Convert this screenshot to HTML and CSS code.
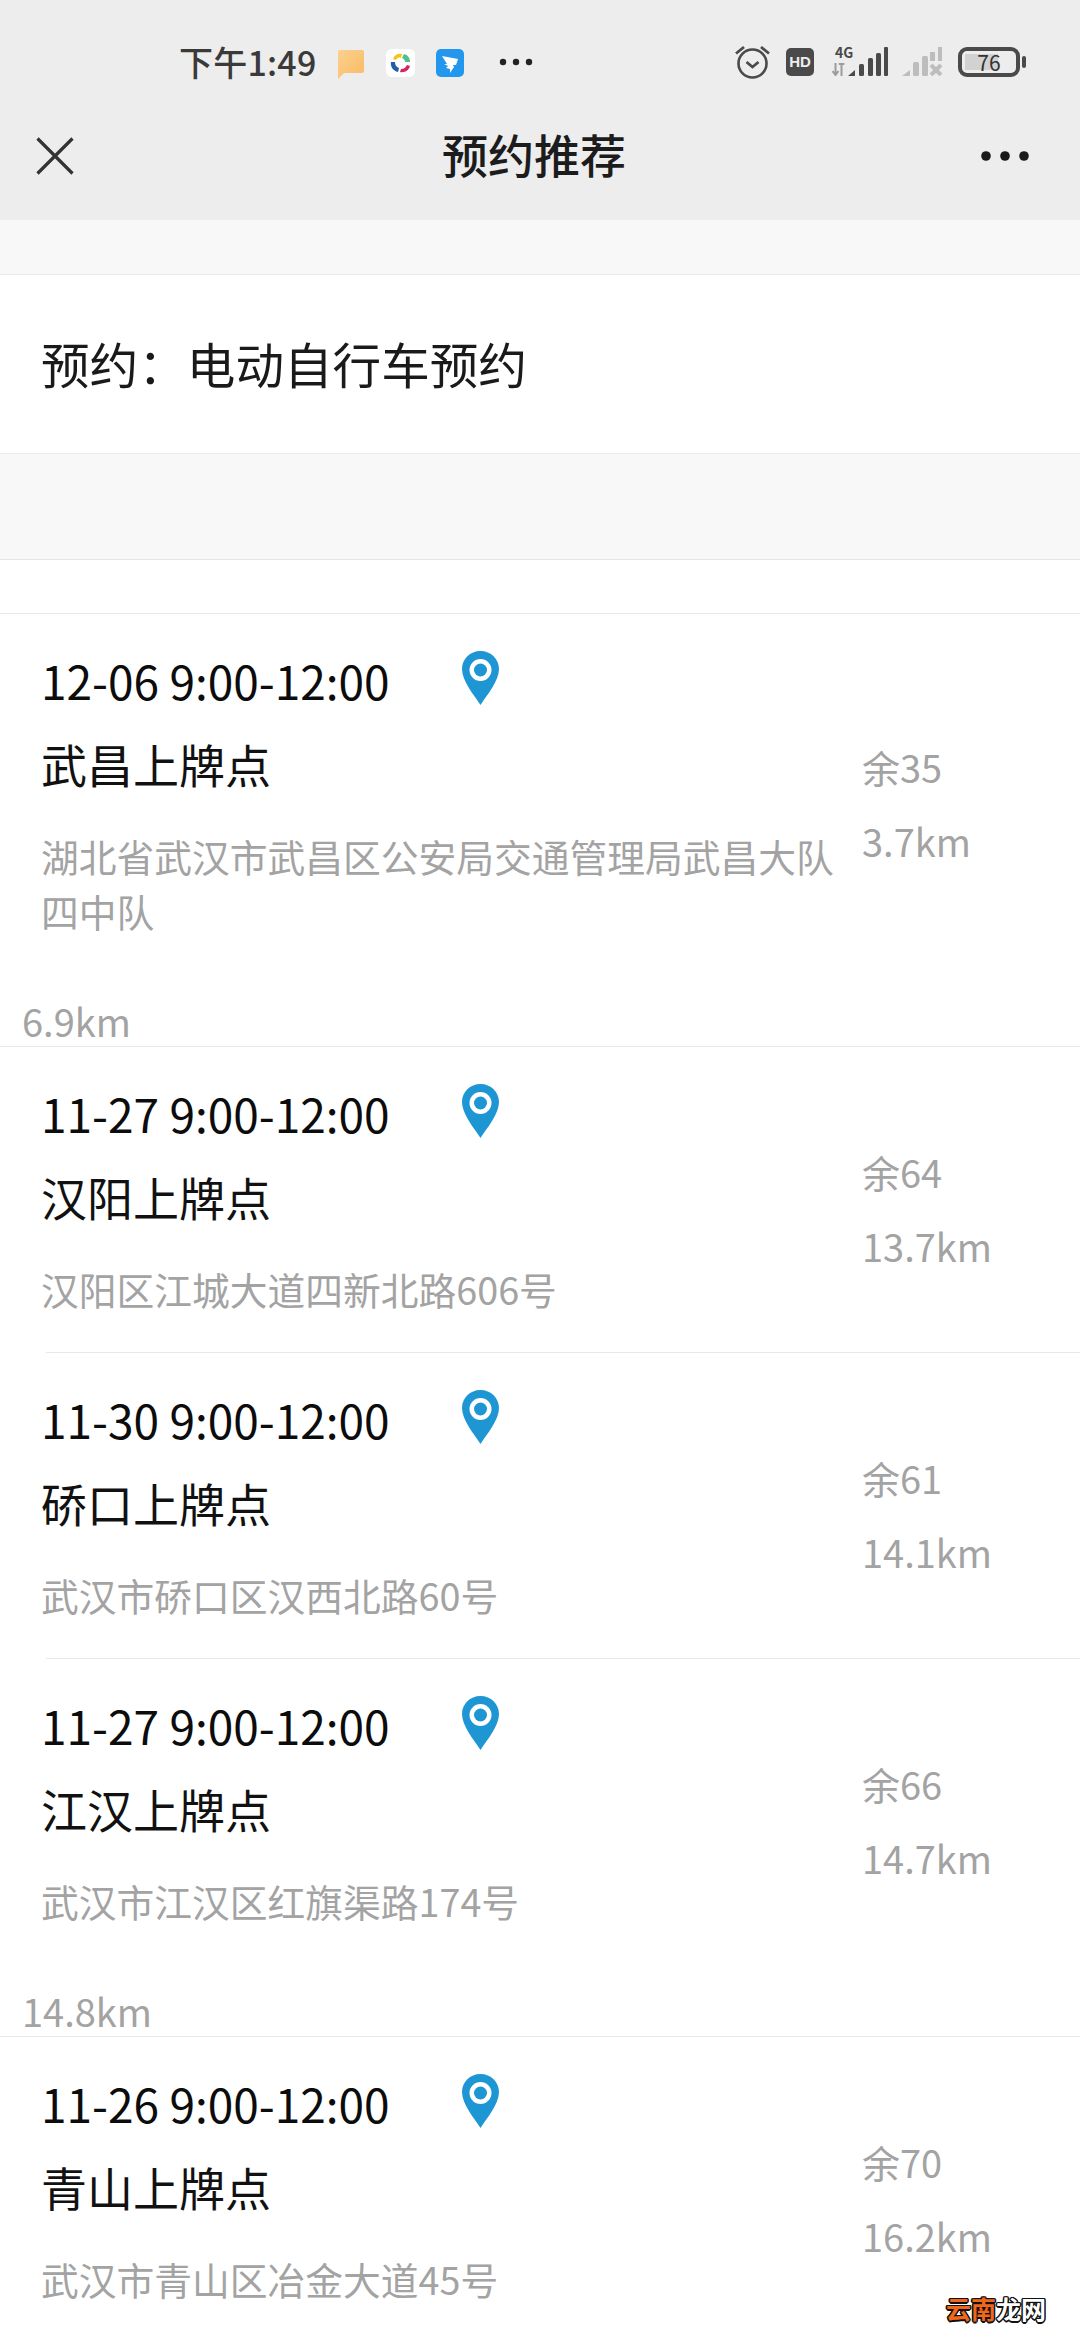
FILE: index.html
```html
<!DOCTYPE html>
<html lang="zh-CN">
<head>
<meta charset="utf-8">
<title>预约推荐</title>
<link rel="stylesheet" href="styles.css">
</head>
<body>
<div class="page">
  <header class="top">
    <div class="status">
      <div class="status-left">
        <span class="clock">下午1:49</span>
        <svg class="ic-msg" width="27" height="30" viewBox="0 0 27 30"><defs><linearGradient id="m" x1="0" y1="0" x2="1" y2="1"><stop offset="0" stop-color="#fcd08f"/><stop offset="1" stop-color="#f8bb62"/></linearGradient></defs><path d="M2 1h23a2 2 0 0 1 2 2v19a2 2 0 0 1-2 2H7l-6 6 0-28a2 2 0 0 1 1-1z" fill="url(#m)"/></svg>
        <svg class="ic-app" width="29" height="28" viewBox="0 0 29 28"><rect width="29" height="28" rx="6" fill="#fff"/><path d="M7 10c1-4 5-6 9-5l-1 4c-2-1-4 0-5 2z" fill="#f5c518"/><path d="M18 5c4 1 6 4 6 8l-5 0c0-2-1-3-3-4z" fill="#4fc08d"/><path d="M24 17c-1 4-5 7-10 6l1-3c3 0 4-1 6-4z" fill="#d8245e"/><path d="M12 23c-5-1-8-6-7-10l4 0c0 3 1 5 4 6z" fill="#1f5fae"/></svg>
        <svg class="ic-ding" width="28" height="28" viewBox="0 0 28 28"><rect width="28" height="28" rx="5" fill="#2396ee"/><path d="M6 7l16 3-2 6-3 0 1 2-4 6 0-4-4-1 2-2-4-2 3 0z" fill="#fff"/></svg>
        <svg class="ic-dots" width="34" height="8" viewBox="0 0 34 8"><circle cx="4" cy="4" r="3.2" fill="#222"/><circle cx="17" cy="4" r="3.2" fill="#222"/><circle cx="30" cy="4" r="3.2" fill="#222"/></svg>
      </div>
      <div class="status-right">
        <svg class="ic-alarm" width="35" height="34" viewBox="0 0 35 34"><circle cx="17.5" cy="18.5" r="14" fill="none" stroke="#4a4a4a" stroke-width="2.6"/><path d="M11.5 17l6 5 6-5" fill="none" stroke="#4a4a4a" stroke-width="2.8"/><path d="M1 8.500l8-6.500M26 2l8 6.500" stroke="#4a4a4a" stroke-width="2.800"/></svg>
        <span class="hd">HD</span>
        <span class="net">
          <span class="net-label">4G</span>
          <svg class="ic-arrows" width="13" height="13" viewBox="0 0 13 13"><path d="M3.500 0v12M0.500 8l3 4 3-4M9.500 13V1M6.800 1h5.500" fill="none" stroke="#9c9c9c" stroke-width="2"/></svg>
          <svg class="ic-bars" width="40" height="29" viewBox="0 0 40 29"><path d="M0 29l7-6v6z" fill="#4a4a4a"/><rect x="11" y="17" width="5" height="12" rx="1.500" fill="#4a4a4a"/><rect x="20" y="11" width="5" height="18" rx="1.500" fill="#4a4a4a"/><rect x="28" y="6" width="5" height="23" rx="1.500" fill="#4a4a4a"/><rect x="36" y="0" width="4" height="29" rx="1" fill="#4a4a4a"/></svg>
        </span>
        <svg class="ic-signal2" width="41" height="29" viewBox="0 0 41 29"><path d="M0 29l8-6v6z" fill="#bdbdbd"/><rect x="11" y="15" width="6" height="14" rx="1.500" fill="#bdbdbd"/><rect x="20" y="9" width="6" height="20" rx="1.500" fill="#bdbdbd"/><rect x="28" y="5" width="5" height="9" fill="#bdbdbd"/><rect x="36" y="0" width="4" height="14" fill="#bdbdbd"/><path d="M29 18l10 10M39 18L29 28" stroke="#bdbdbd" stroke-width="4"/></svg>
        <span class="battery"><span class="battery-fill"></span><span class="battery-num">76</span></span>
        <span class="battery-nub"></span>
      </div>
    </div>
    <nav class="nav">
      <svg class="ic-close" width="38" height="38" viewBox="0 0 38 38"><path d="M1.500 1.500l35 35M36.500 1.500l-35 35" stroke="#333" stroke-width="3.200"/></svg>
      <h1 class="nav-title">预约推荐</h1>
      <svg class="ic-more" width="48" height="10" viewBox="0 0 48 10"><circle cx="5" cy="5" r="4.800" fill="#1a1a1a"/><circle cx="24" cy="5" r="4.800" fill="#1a1a1a"/><circle cx="43" cy="5" r="4.800" fill="#1a1a1a"/></svg>
    </nav>
  </header>

  <div class="band band-a"></div>
  <section class="heading">预约：电动自行车预约</section>
  <div class="band band-b"></div>
  <div class="blank"></div>

  <div class="rule"></div>
  <article class="card">
    <div class="row">
      <div class="main">
        <div class="when"><span>12-06 9:00-12:00</span><svg class="pin" width="37" height="54" viewBox="0 0 37 54"><path fill-rule="evenodd" d="M18.500 0C8 0 0 8 0 18c0 12 12 26 18.500 36C25 44 37 30 37 18 37 8 29 0 18.500 0zm0 8a11 11 0 1 1 0 22 11 11 0 0 1 0-22z" fill="#1f96d4"/><circle cx="18.500" cy="19" r="6.500" fill="#1f96d4"/></svg></div>
        <div class="name">武昌上牌点</div>
        <div class="addr">湖北省武汉市武昌区公安局交通管理局武昌大队四中队</div>
      </div>
      <div class="side"><p>余35</p><p>3.7km</p></div>
    </div>
    <p class="stray">6.9km</p>
  </article>

  <div class="rule"></div>
  <article class="card">
    <div class="row">
      <div class="main">
        <div class="when"><span>11-27 9:00-12:00</span><svg class="pin" width="37" height="54" viewBox="0 0 37 54"><path fill-rule="evenodd" d="M18.500 0C8 0 0 8 0 18c0 12 12 26 18.500 36C25 44 37 30 37 18 37 8 29 0 18.500 0zm0 8a11 11 0 1 1 0 22 11 11 0 0 1 0-22z" fill="#1f96d4"/><circle cx="18.500" cy="19" r="6.500" fill="#1f96d4"/></svg></div>
        <div class="name">汉阳上牌点</div>
        <div class="addr">汉阳区江城大道四新北路606号</div>
      </div>
      <div class="side"><p>余64</p><p>13.7km</p></div>
    </div>
  </article>

  <div class="rule rule-inset"></div>
  <article class="card">
    <div class="row">
      <div class="main">
        <div class="when"><span>11-30 9:00-12:00</span><svg class="pin" width="37" height="54" viewBox="0 0 37 54"><path fill-rule="evenodd" d="M18.500 0C8 0 0 8 0 18c0 12 12 26 18.500 36C25 44 37 30 37 18 37 8 29 0 18.500 0zm0 8a11 11 0 1 1 0 22 11 11 0 0 1 0-22z" fill="#1f96d4"/><circle cx="18.500" cy="19" r="6.500" fill="#1f96d4"/></svg></div>
        <div class="name">硚口上牌点</div>
        <div class="addr">武汉市硚口区汉西北路60号</div>
      </div>
      <div class="side"><p>余61</p><p>14.1km</p></div>
    </div>
  </article>

  <div class="rule rule-inset"></div>
  <article class="card">
    <div class="row">
      <div class="main">
        <div class="when"><span>11-27 9:00-12:00</span><svg class="pin" width="37" height="54" viewBox="0 0 37 54"><path fill-rule="evenodd" d="M18.500 0C8 0 0 8 0 18c0 12 12 26 18.500 36C25 44 37 30 37 18 37 8 29 0 18.500 0zm0 8a11 11 0 1 1 0 22 11 11 0 0 1 0-22z" fill="#1f96d4"/><circle cx="18.500" cy="19" r="6.500" fill="#1f96d4"/></svg></div>
        <div class="name">江汉上牌点</div>
        <div class="addr">武汉市江汉区红旗渠路174号</div>
      </div>
      <div class="side"><p>余66</p><p>14.7km</p></div>
    </div>
    <p class="stray">14.8km</p>
  </article>

  <div class="rule"></div>
  <article class="card">
    <div class="row">
      <div class="main">
        <div class="when"><span>11-26 9:00-12:00</span><svg class="pin" width="37" height="54" viewBox="0 0 37 54"><path fill-rule="evenodd" d="M18.500 0C8 0 0 8 0 18c0 12 12 26 18.500 36C25 44 37 30 37 18 37 8 29 0 18.500 0zm0 8a11 11 0 1 1 0 22 11 11 0 0 1 0-22z" fill="#1f96d4"/><circle cx="18.500" cy="19" r="6.500" fill="#1f96d4"/></svg></div>
        <div class="name">青山上牌点</div>
        <div class="addr">武汉市青山区冶金大道45号</div>
      </div>
      <div class="side"><p>余70</p><p>16.2km</p></div>
    </div>
  </article>

  <div class="watermark"><span class="wm-orange">云南</span><span class="wm-white">龙网</span></div>
</div>
</body>
</html>
```

FILE: styles.css
```css
* { box-sizing: border-box; margin: 0; padding: 0; }
html, body { background: #fff; }
body {
  font-family: "Noto Sans CJK SC", "Noto Sans", sans-serif;
  color: #111;
}
.page { position: relative; width: 1080px; height: 2340px; overflow: hidden; background: #fff; }

.top { height: 220px; background: #ededed; display: flex; flex-direction: column; }
.status { height: 124px; padding: 45px 54px 0 179px; display: flex; justify-content: space-between; align-items: flex-start; }
.status-left { display: flex; align-items: center; height: 34px; }
.clock { font-size: 34px; line-height: 34px; font-weight: 500; color: #3a3a3a; letter-spacing: 0.2px; }
.ic-msg { margin-left: 21px; margin-top: 4px; }
.ic-app { margin-left: 22px; margin-top: 2px; }
.ic-ding { margin-left: 21px; margin-top: 2px; }
.ic-dots { margin-left: 35px; }

.status-right { display: flex; align-items: flex-start; height: 34px; }
.hd {
  width: 28px; height: 28px; margin-left: 16px; margin-top: 3px;
  background: #4a4a4a; border-radius: 5px; color: #eee;
  font-family: "Liberation Sans", sans-serif; font-weight: 700; font-size: 15px; line-height: 28px; text-align: center;
}
.net { position: relative; width: 56px; height: 30px; margin-left: 18px; margin-top: 1px; }
.net-label { position: absolute; left: 3px; top: -1px; font-size: 14px; line-height: 14px; font-weight: 700; color: #4a4a4a; }
.ic-arrows { position: absolute; left: 0; bottom: 0; }
.ic-bars { position: absolute; right: 0; top: 1px; }
.ic-signal2 { margin-left: 14px; margin-top: 2px; }
.battery {
  position: relative; width: 62px; height: 30px; margin-left: 15px; margin-top: 2px;
  border: 4px solid #4a4a4a; border-radius: 9px;
}
.battery-fill { position: absolute; left: 3px; top: 3px; bottom: 3px; width: 33px; background: #d2d2d2; }
.battery-num { position: absolute; left: 0; right: 0; top: 0; text-align: center; font-size: 21px; line-height: 22px; color: #333; }
.battery-nub { width: 4px; height: 12px; margin-left: 2px; margin-top: 11px; background: #4a4a4a; border-radius: 2px; }

.nav { height: 96px; display: flex; align-items: center; padding: 0 51px 32px 36px; }
.nav-title { margin-left: 368px; margin-right: auto; margin-bottom: 6px; font-size: 46px; line-height: 60px; font-weight: 500; color: #1c1c1c; }

.band { background: #f8f8f8; }
.band-a { height: 54px; }
.heading {
  height: 180px; border-top: 1px solid #e8e8e8; border-bottom: 1px solid #ececec; background: #fff;
  padding-left: 41px; font-size: 48.6px; line-height: 176px; color: #1a1a1a;
  white-space: nowrap;
}
.band-b { height: 105px; }
.blank { height: 54px; background: #fff; border-top: 1px solid #e6e6e6; }

.rule { height: 1px; background: #e8e8e8; }
.rule-inset { margin-left: 46px; }

.card { background: #fff; }
.row { display: flex; }
.main { flex: 0 0 862px; padding: 38px 0 36px 41px; }
.when { display: flex; align-items: flex-start; gap: 72px; font-size: 46px; line-height: 56px; color: #0c0c0c; white-space: nowrap; }
.pin { flex: none; margin-top: -1px; margin-bottom: -1px; }
.name { font-size: 46px; line-height: 56px; margin-top: 27px; color: #111; white-space: nowrap; }
.addr { font-size: 37.75px; line-height: 55px; margin-top: 37px; color: #a3a3a3; }
.side { flex: 1; align-self: center; padding-top: 18px; font-size: 38px; line-height: 55px; color: #a3a3a3; }
.side p + p { margin-top: 19px; }
.stray { padding-left: 22px; margin-top: 21px; font-size: 38px; line-height: 51px; color: #a3a3a3; }

.watermark {
  position: absolute; left: 946px; top: 2294px;
  font-size: 25px; line-height: 28px; font-weight: 700; white-space: nowrap;
  text-shadow: -1.5px 0 #111, 1.5px 0 #111, 0 -1.5px #111, 0 1.5px #111, 1px 1px #111, -1px -1px #111, 1px -1px #111, -1px 1px #111;
}
.wm-orange { color: #f0661a; }
.wm-white { color: #fff; }
```
